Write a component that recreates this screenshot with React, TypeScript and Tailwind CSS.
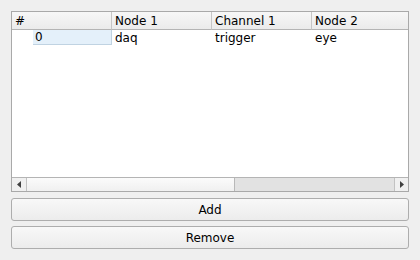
import { Fragment } from 'react'

const COLUMNS = ['#', 'Node 1', 'Channel 1', 'Node 2']

const ROWS = [{ id: '0', node1: 'daq', channel1: 'trigger', node2: 'eye' }]

function HeaderCell({ label, last = false }: { label: string; last?: boolean }) {
  return (
    <div
      className={
        'h-[18px] pl-[3px] leading-[18px] border-b border-[#b4b4b4] bg-gradient-to-b from-[#f7f7f7] to-[#ebebeb] ' +
        (last ? 'flex-1' : 'w-[100px] border-r border-r-[#c6c6c6]')
      }
    >
      {label}
    </div>
  )
}

function ButtonBar({ label }: { label: string }) {
  return (
    <button className="h-[23px] w-full rounded-[3px] border border-[#adadad] bg-gradient-to-b from-[#f8f8f8] to-[#ececec] text-[12px] text-black leading-none">
      {label}
    </button>
  )
}

export default function App() {
  return (
    <div
      className="w-[420px] h-[260px] bg-[#efefef] p-[11px] flex flex-col gap-[6px] text-[12px] text-black"
      style={{ fontFamily: '"DejaVu Sans", sans-serif' }}
    >
      {/* Table */}
      <div className="h-[182px] w-[398px] border border-[#a9a9a9] bg-white flex flex-col">
        <div className="flex">
          {COLUMNS.map((c, i) => (
            <HeaderCell key={c} label={c} last={i === COLUMNS.length - 1} />
          ))}
        </div>

        <div className="flex-1">
          {ROWS.map((r) => (
            <Fragment key={r.id}>
              <div className="flex h-[18px] items-start">
                <div className="w-[100px] flex justify-end">
                  <div className="w-[79px] h-[15px] bg-[#e4f0fa] border-r border-b border-[#c0d3e2] pl-[2px] leading-[15px]">
                    {r.id}
                  </div>
                </div>
                <div className="w-[100px] pl-[3px] leading-[16px]">{r.node1}</div>
                <div className="w-[100px] pl-[3px] leading-[16px]">{r.channel1}</div>
                <div className="flex-1 pl-[3px] leading-[16px]">{r.node2}</div>
              </div>
            </Fragment>
          ))}
        </div>

        {/* Horizontal scrollbar */}
        <div className="h-[14px] flex border-t border-[#b4b4b4] bg-[#e2e2e2]">
          <div className="w-[15px] flex items-center justify-center bg-[#f0f0f0] border-r border-[#c2c2c2]">
            <svg width="4" height="7" viewBox="0 0 4 7">
              <path d="M4 0 L0 3.5 L4 7 Z" fill="#404040" />
            </svg>
          </div>
          <div className="w-[208px] bg-gradient-to-b from-[#fbfbfb] to-[#f0f0f0] border-r border-[#b8b8b8]" />
          <div className="flex-1" />
          <div className="w-[14px] flex items-center justify-center bg-[#f0f0f0] border-l border-[#c2c2c2]">
            <svg width="4" height="7" viewBox="0 0 4 7">
              <path d="M0 0 L4 3.5 L0 7 Z" fill="#404040" />
            </svg>
          </div>
        </div>
      </div>

      <div className="w-[398px] flex flex-col gap-[5px]">
        <ButtonBar label="Add" />
        <ButtonBar label="Remove" />
      </div>
    </div>
  )
}
